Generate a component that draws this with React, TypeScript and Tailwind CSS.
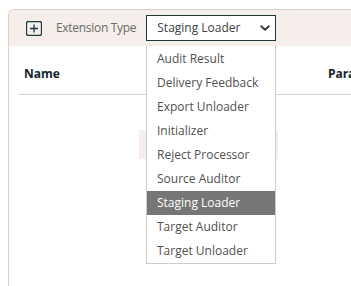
import React from 'react';

const options = [
  'Audit Result',
  'Delivery Feedback',
  'Export Unloader',
  'Initializer',
  'Reject Processor',
  'Source Auditor',
  'Staging Loader',
  'Target Auditor',
  'Target Unloader',
];

const PlusIcon = () => (
  <svg width="16" height="15" viewBox="0 0 16 15" fill="none">
    <rect x="0.5" y="0.5" width="15" height="14" rx="2" stroke="#1f3a44" strokeWidth="1.3" />
    <path d="M8 3.5v8M4 7.5h8" stroke="#1f3a44" strokeWidth="1.3" />
  </svg>
);

const Chevron = () => (
  <svg width="10" height="6" viewBox="0 0 10 6" fill="none">
    <path d="M1.2 1.2l3.8 3.6 3.8-3.6" stroke="#3a3f44" strokeWidth="1.9" strokeLinecap="round" strokeLinejoin="round" />
  </svg>
);

export default function App() {
  const selected = 'Staging Loader';

  return (
    <div className="relative w-[351px] h-[286px] overflow-hidden bg-white font-['Open_Sans',sans-serif] text-[12px]">
      <div className="ml-2 mt-[9px] h-[300px] w-[360px] rounded-tl-md border-l border-t border-[#d6d1cc]">
        <div className="flex h-9 items-center rounded-tl-md bg-[#f5eeea] pl-[17px]">
          <PlusIcon />
          <span className="ml-[14px] tracking-[-0.3px] text-[#6b6b6b]">Extension Type</span>
          <div className="ml-[10px] flex h-[26px] w-[130px] items-center justify-between border border-[#1d3b36] bg-white pl-[10px] pr-[5px] text-[#404040]">
            <span>{selected}</span>
            <Chevron />
          </div>
        </div>

        <div className="px-[10px]">
          <div className="flex h-[49px] items-center border-b border-[#d6d1cc] pl-[5px] pt-[7px] font-bold text-[#14222c]">
            <span>Name</span>
            <span className="ml-[268px]">Parameters</span>
          </div>
          <div className="flex justify-center pt-[35px] pl-[39px]">
            <div className="h-[29px] w-[139px] bg-[#f5eeea]" />
          </div>
        </div>
      </div>

      <div className="absolute left-[146px] top-[46px] w-[130px] border border-t-0 border-[#cccccc] bg-white pt-px text-[#505050]">
        {options.map((o) => (
          <div
            key={o}
            className={`flex h-6 items-center pl-[10px] ${o === selected ? 'bg-[#767676] text-white' : ''}`}
          >
            {o}
          </div>
        ))}
      </div>
    </div>
  );
}
